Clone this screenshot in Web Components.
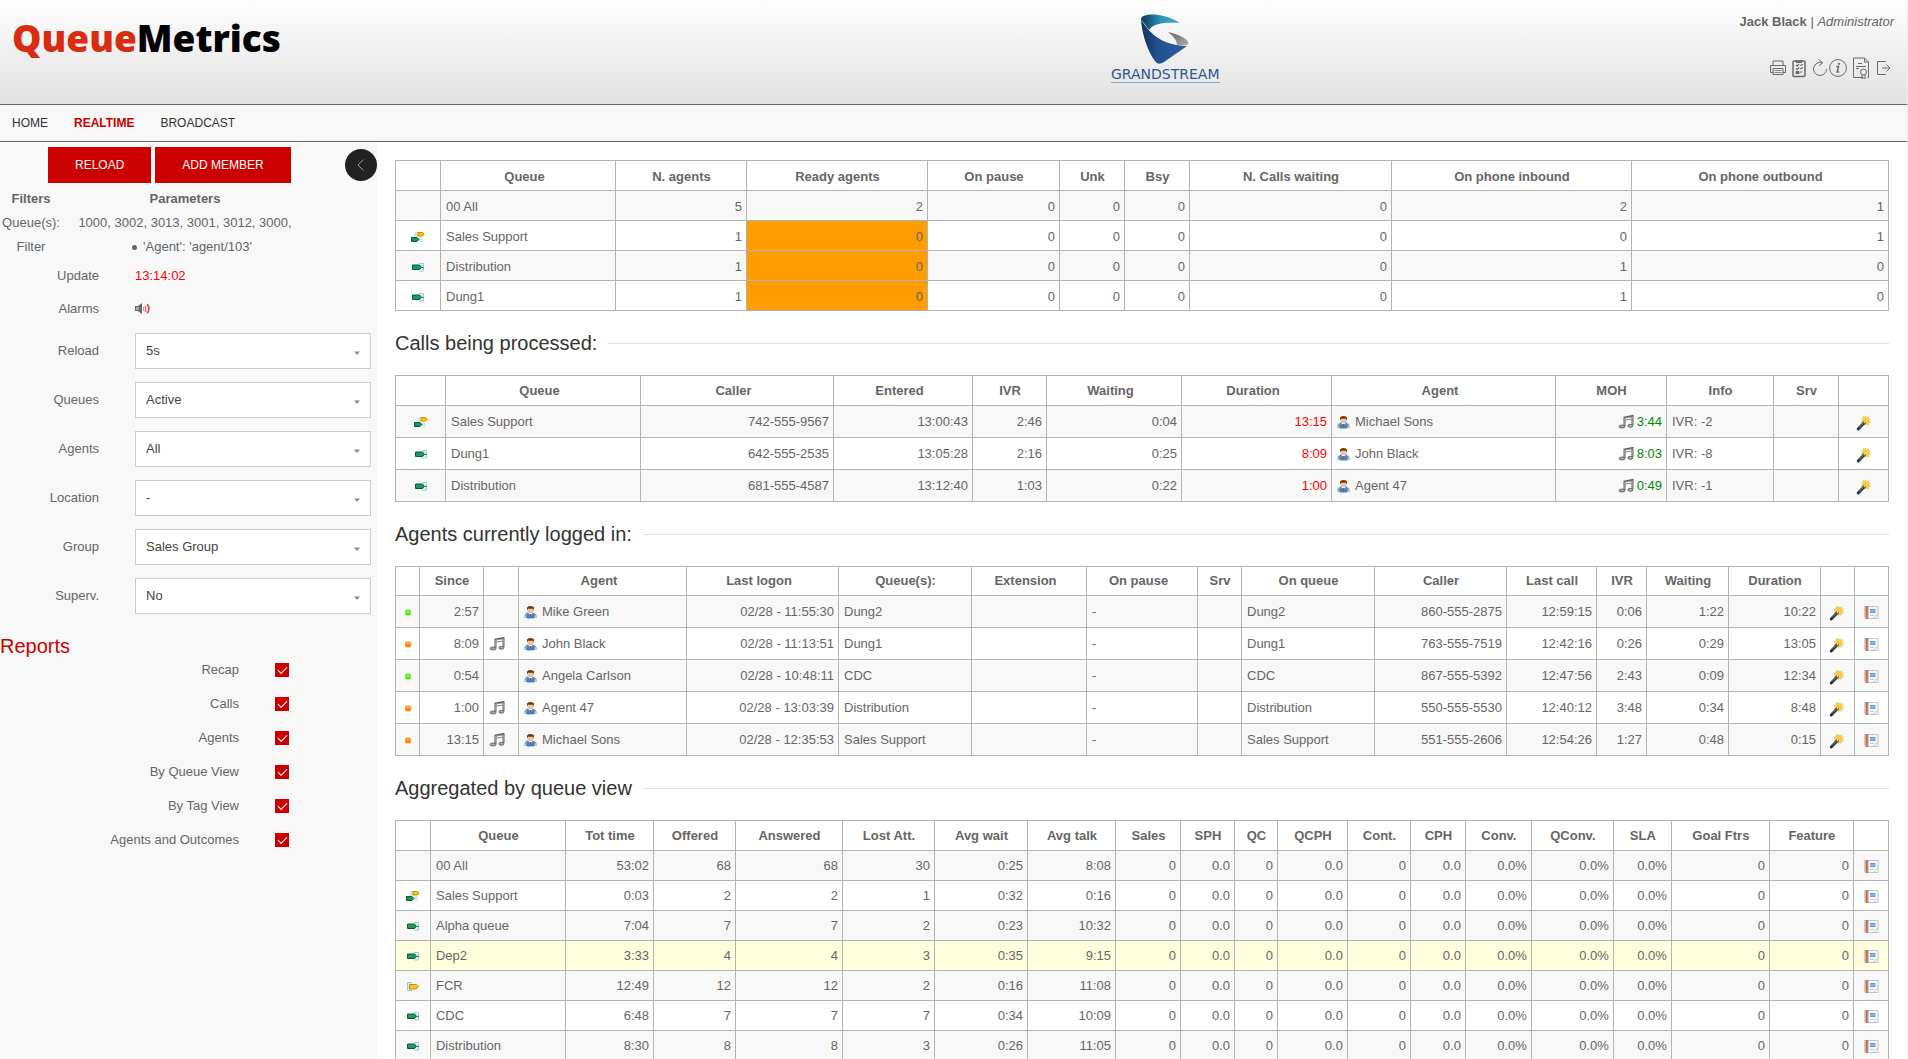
<!DOCTYPE html>
<html lang="en">
<head>
<meta charset="utf-8">
<title>QueueMetrics - Realtime</title>
<style>
html, body { margin: 0; height: 100%; overflow: hidden; background: #fff; }
body { font-family: "Liberation Sans", Arial, sans-serif; font-size: 13px; line-height: 20px; color: #666; }
</style>
</head>
<body>
<qm-app></qm-app>

<script>
const define = (name, html, setup) => {
  const template = document.createElement('template');
  template.innerHTML = html;
  customElements.define(name, class extends HTMLElement {
    connectedCallback() {
      if (this.shadowRoot) return;
      const root = this.attachShadow({ mode: 'open' });
      root.append(template.content.cloneNode(true));
      if (setup) setup.call(this, root);
    }
  });
};

/* ---------- icons ---------- */
const line = 'fill="none" stroke="#6b6b6b" stroke-width="1"';
const ICONS = {
  printer: [20, 22, `<g ${line}><path d="M5 8.500V4h10v4.500M5.500 15.500H2.500v-7h15v7h-3"/><path d="M5 11.500h10v6H5z"/><path d="M6.500 13.500h7M6.500 15.500h7" stroke="#888"/></g>`],
  clipboard: [22, 22, `<g ${line}><rect x="5" y="4" width="12" height="15.500" rx="1" stroke-width="1.500"/><path d="M8 3.500h6v2H8z" fill="#777"/><path d="M8 8l1.200 1.200L11 7M8 11.500l1.200 1.200 1.800-2.200M12 8.500l3-1M12 12l3-1.500M12 15h2" stroke-width="1.200"/><path d="M8 14.500h3v2H8z" fill="#666"/></g>`],
  refresh: [18, 22, `<g ${line}><path d="M16.500 12a6.500 6.500 0 1 1-4-6M8.500 2.500l4.200 3.300L9 9"/></g>`],
  info: [20, 22, `<g ${line}><circle cx="10" cy="11" r="8.400"/><path d="M8.300 9.500h2.200l-1.300 5.500h2" stroke-width="1.500"/><circle cx="11" cy="6.800" r=".7" fill="#666"/></g>`],
  certificate: [26, 22, `<g ${line}><path d="M15 20.500H5.500v-19.500h11l4 4v15.500h-1M16.500 1v4h4M10 6.500h4M8 9.500h10"/><circle cx="15.500" cy="15" r="3"/><path d="M14 17.800v4l1.500-1 1.500 1v-4"/><path d="M8 11.500h3"/></g>`],
  logout: [20, 22, `<g ${line}><path d="M11.500 5V4.500h-8v13h8V17M8 11h8M12.500 7.500l3.500 3.500-3.500 3.500"/></g>`],
  chevron: [12, 14, `<path d="M8.500 1.500L3 7l5.500 5.500" fill="none" stroke="#999"/>`],
  arrow: [8, 5, `<path d="M1 0.500h6L4 4z" fill="#888"/>`],
  speaker: [16, 12, `<path d="M0 3h3l4-3v11L3 8H0z" fill="#666"/><path d="M1 4h3v3H1z" fill="#aaa"/><path d="M8.500 4v4" stroke="#e88"/><path d="M10.500 3v6" stroke="#f66" stroke-width="1.500"/><path d="M12 1.500c2.500 1 2.500 7 0 8.500" fill="none" stroke="#e23a44" stroke-width="1.500"/>`],
  inbound: [14, 12, `<path d="M8 2.500h4.500v7.500H8" fill="#dff1f3" stroke="#9ccdd3"/><path d="M1.500 4h7L10.500 6.300 8.500 8.500h-7z" fill="#1b9a5c" stroke="#0a5a35"/><path d="M11 6.500h1.500" stroke="#267"/>`],
  outbound: [14, 12, `<path d="M6 2.500H1.500v8H6" fill="#d5f0f4" stroke="#8fcdd6"/><path d="M3.500 4.500h6.500l2.500 2-2.500 2.500H3.500z" fill="#ffc21a" stroke="#cf8a0c"/>`],
  mixed: [14, 12, `<path d="M3.500 1h3.500v5H3.500zM8.500 6h3v5H8.500z" fill="#cfe6f2"/><path d="M7 1.500h4.500L13.200 3.200 11.500 5H7z" fill="#ffc800" stroke="#d08a00"/><path d="M.500 6.500h5.500L8 8.500 6 10.500H.500z" fill="#179653" stroke="#0a5a35"/>`],
  person: [13, 14, `<path d="M.500 13V10l2.500-2.500h6.500L12.500 10v3z" fill="#5b9bd8"/><path d="M3 8.500h7v5H3z" fill="#3f86ca"/><path d="M0 10.500h2V13H0zM10.800 10.500h2V13h-2z" fill="#f0ba84"/><path d="M4.500 8h4L6.500 10.500z" fill="#fff"/><path d="M6 9h1.200v3H6z" fill="#d33"/><circle cx="6.500" cy="4.500" r="3.200" fill="#f3c49a"/><path d="M3 5.500V2.500Q3.500 1 6.500 1T10 2.500V5.500L9 3.800H4z" fill="#6b3b16"/>`],
  notes: [16, 14, `<path d="M6.500 11V2.500l8-1.500v9" fill="none" stroke="#5c5c5c" stroke-width="2"/><path d="M6.500 10V3l8-1.200V9.500" fill="none" stroke="#aaa" stroke-width=".7"/><path d="M7.500 5l6-.8" stroke="#888"/><ellipse cx="4" cy="11.500" rx="3" ry="1.500" fill="#aaa" stroke="#555" stroke-width=".8"/><ellipse cx="12.300" cy="10.800" rx="2.500" ry="1.500" fill="#aaa" stroke="#555" stroke-width=".8"/>`],
  wand: [16, 20, `<path d="M9.500 4l1 2 2-1.300-.3 2.300 2.300.2-1.500 1.800 1.500 1.800-2.300.2.300 2.300-2-1.300-1 2-1-2-2 1.300V11L5 10l1.500-1.500L5.500 7l2-.3L7 4.500l1.800 1z" fill="#f8cf3a" stroke="#e8b21a" stroke-width=".4"/><path d="M2.200 17L8.500 10.500" stroke="#333" stroke-width="3" stroke-linecap="round"/><path d="M3 15.500l4.500-4.500" stroke="#999" stroke-width=".8"/><path d="M8 9.500l1.300 1.300" stroke="#ddd" stroke-width="2"/>`],
  book: [16, 15, `<path d="M3.500 1.500H15v12H3.500z" fill="#f6f8fa" stroke="#bfc5cb"/><path d="M2.500 1h2.300v13H2.500z" fill="#c4694c"/><path d="M1.800 1.500v12" stroke="#b9a08e" stroke-dasharray="1 1" stroke-width="1.600"/><path d="M5.300 1.500v12" stroke="#9a9a9a" stroke-width=".6"/><path d="M7 4h5.500v4H7z" fill="#6a9be0"/><path d="M7 6h5.500" stroke="#a9c6f0"/><path d="M7 10.500h4" stroke="#c8cdd4"/><path d="M11 13l3.500-4" stroke="#c5cbd2"/>`],
  ready: [8, 10, `<rect x="1" y="2.500" width="6" height="6" rx="2" fill="#6df01e"/><path d="M2 7.500h4" stroke="#43d813"/>`],
  busy: [8, 10, `<rect x="1" y="2.500" width="6" height="6" rx="2" fill="#ff8c10"/><path d="M2 4h4" stroke="#ffb84a"/>`],
  grandstream: [50, 52, `<defs><linearGradient id="a" x1="0" x2="1"><stop offset="0" stop-color="#0c3550"/><stop offset=".5" stop-color="#2a93b5"/><stop offset="1" stop-color="#3fb4d6"/></linearGradient><linearGradient id="b" x1="0" x2="1"><stop offset="0" stop-color="#142f57"/><stop offset=".35" stop-color="#22508f"/><stop offset="1" stop-color="#2b5c9c"/></linearGradient><linearGradient id="c" x1="0" x2="1" y2="1"><stop offset="0" stop-color="#666"/><stop offset="1" stop-color="#aaa"/></linearGradient></defs><path d="M1 5C2 -1 22 -2 40 9 27 8 13 9 9 16z" fill="url(#a)"/><path d="M1 5C8 18 22 32 47 32L24 48Q18 52 15 47C7 36 2 20 1 5z" fill="url(#b)"/><path d="M28 18C38 20 48 25 48.500 29Q49 32 37 31C37 26 33 22 28 18z" fill="url(#c)"/>`]
};
define('qm-icon', `<style>:host{display:inline-block;vertical-align:middle;line-height:0}svg{display:block}</style>`, function (root) {
  const [w, h, art] = ICONS[this.getAttribute('name')];
  root.innerHTML += `<svg width="${w}" height="${h}" viewBox="0 0 ${w} ${h}" aria-hidden="true">${art}</svg>`;
});

/* ---------- header ---------- */
define('qm-header', `
<style>
:host { display: grid; grid-template-columns: 44% 34% 22%; height: 104px; box-sizing: content-box;
  background: linear-gradient(#fefefe, #e2e2e2); border-bottom: 1px solid #666; }
.brand { padding: 14px 0 0 12px; font: 800 37px/48px "Open Sans", sans-serif; color: #000; white-space: nowrap; }
.brand span { color: #d92d12; }
.partner { display: flex; flex-direction: column; align-items: center; padding: 14px 0 0 4px; }
.partner div { font: 14px/16px "DejaVu Sans", sans-serif; color: #2b5796; border-bottom: 1px solid #8fa9cc; }
.user { display: flex; flex-direction: column; align-items: flex-end; padding: 12px 13px 0 0; gap: 25px; }
.tools { display: flex; }
button { border: 0; padding: 0; background: none; display: block; cursor: pointer; }
</style>
<div class="brand"><span>Queue</span>Metrics</div>
<div class="partner"><qm-icon name="grandstream"></qm-icon><div>GRANDSTREAM</div></div>
<div class="user">
  <div><b>Jack Black</b> | <i>Administrator</i></div>
  <div class="tools">
    <button aria-label="Print"><qm-icon name="printer"></qm-icon></button>
    <button aria-label="Tasks"><qm-icon name="clipboard"></qm-icon></button>
    <button aria-label="Refresh"><qm-icon name="refresh"></qm-icon></button>
    <button aria-label="Info"><qm-icon name="info"></qm-icon></button>
    <button aria-label="License"><qm-icon name="certificate"></qm-icon></button>
    <button aria-label="Log out"><qm-icon name="logout"></qm-icon></button>
  </div>
</div>`);

define('qm-nav', `
<style>
:host { display: block; background: #f8f8f8; border-bottom: 1px solid #666; }
nav { display: flex; gap: 26px; height: 36px; align-items: center; padding-left: 12px; font-size: 12px; }
a { color: #333; text-decoration: none; }
a[aria-current] { color: #c00; font-weight: bold; }
</style>
<nav><a href="#home">HOME</a><a href="#realtime" aria-current="page">REALTIME</a><a href="#broadcast">BROADCAST</a></nav>`);

/* ---------- sidebar ---------- */
define('qm-field', `
<style>
:host { display: grid; grid-template-columns: 99px 1fr; column-gap: 36px; align-items: center; height: 36px; margin-bottom: 13px; }
label { text-align: right; }
.box { display: grid; align-items: center; }
select, qm-icon { grid-area: 1 / 1; }
select { appearance: none; width: 100%; height: 36px; margin: 0; padding: 0 10px; border: 1px solid #ccc; border-radius: 0;
  background: #fff; color: #444; font: inherit; }
qm-icon { justify-self: end; padding: 4px 10px 0 0; pointer-events: none; }
</style>
<label for="s"></label><div class="box"><select id="s"></select><qm-icon name="arrow"></qm-icon></div>`, function (root) {
  root.querySelector('label').textContent = this.getAttribute('label');
  root.querySelector('select').add(new Option(this.getAttribute('value')));
});

define('qm-check', `
<style>
:host { display: grid; grid-template-columns: 239px 14px; column-gap: 36px; align-items: center; height: 20px; margin-bottom: 14px; }
label { text-align: right; }
input { appearance: none; width: 14px; height: 14px; margin: 0; background: #c00; display: grid; place-items: center; }
input:checked::before { content: ""; width: 8px; height: 4px; border: solid #fff; border-width: 0 0 1px 1px; transform: rotate(-45deg) translate(1px, -1px); }
</style>
<label for="c"><slot></slot></label><input type="checkbox" id="c" checked>`);

define('qm-sidebar', `
<style>
:host { display: block; background: #f8f8f8; overflow: hidden; }
.actions { display: flex; align-items: center; gap: 4px; padding: 5px 0 0 48px; }
.actions button { height: 36px; border: 0; padding: 0 27px; background: #c00; color: #fff; font: inherit; font-size: 12px; }
.actions .collapse { width: 32px; height: 32px; border-radius: 50%; background: #222; padding: 0; margin-left: auto;
  display: flex; align-items: center; justify-content: center; }
.filters { border-collapse: collapse; table-layout: fixed; width: 308px; margin-top: 4px; }
.filters th, .filters td { height: 24px; padding: 0; text-align: center; }
.filters th:first-child { width: 62px; }
.filters tr > :first-child { white-space: nowrap; }
ul { margin: 0; padding: 0 0 0 14px; list-style: none; }
li { display: flex; align-items: center; justify-content: center; gap: 6px; }
li::before { content: ""; width: 5px; height: 5px; border-radius: 50%; background: #666; }
.row { display: grid; grid-template-columns: 99px 1fr; column-gap: 36px; align-items: center; height: 33px; }
.row > :first-child { text-align: right; }
.time { color: #f00; }
.fields { padding: 8px 6px 0 0; }
h2 { margin: 20px 0 2px; font-size: 20px; line-height: 24px; font-weight: normal; color: #c00; }
</style>
<div class="actions"><button>RELOAD</button><button>ADD MEMBER</button><button class="collapse" aria-label="Collapse"><qm-icon name="chevron"></qm-icon></button></div>
<table class="filters">
  <tr><th>Filters</th><th>Parameters</th></tr>
  <tr><td>Queue(s):</td><td>1000, 3002, 3013, 3001, 3012, 3000,</td></tr>
  <tr><td>Filter</td><td><ul><li>'Agent': 'agent/103'</li></ul></td></tr>
</table>
<div class="row"><span>Update</span><span class="time">13:14:02</span></div>
<div class="row"><span>Alarms</span><qm-icon name="speaker"></qm-icon></div>
<div class="fields">
  <qm-field label="Reload" value="5s"></qm-field>
  <qm-field label="Queues" value="Active"></qm-field>
  <qm-field label="Agents" value="All"></qm-field>
  <qm-field label="Location" value="-"></qm-field>
  <qm-field label="Group" value="Sales Group"></qm-field>
  <qm-field label="Superv." value="No"></qm-field>
</div>
<h2>Reports</h2>
<qm-check>Recap</qm-check>
<qm-check>Calls</qm-check>
<qm-check>Agents</qm-check>
<qm-check>By Queue View</qm-check>
<qm-check>By Tag View</qm-check>
<qm-check>Agents and Outcomes</qm-check>`);

/* ---------- content ---------- */
define('qm-heading', `
<style>
:host { display: flex; align-items: center; gap: 11px; height: 64px; }
h2 { margin: 0; font-size: 20px; line-height: 24px; font-weight: normal; color: #333; }
:host::after { content: ""; flex: 1; border-top: 1px solid #e2e2e2; }
</style><h2><slot></slot></h2>`);

/* Column: [title, relative width, alignment, sortable]. Cell: text, or [icon, text, css class]. */
const L = 'l', R = 'r', C = 'c', S = 'sort';
const TABLES = {
  recap: {
    cols: [['', 45, C], ['Queue', 175, L, S], ['N. agents', 131, R], ['Ready agents', 181, R], ['On pause', 132, R], ['Unk', 65, R], ['Bsy', 65, R], ['N. Calls waiting', 202, R], ['On phone inbound', 240, R], ['On phone outbound', 257, R]],
    rows: [
      ['', '00 All', '5', '2', '0', '0', '0', '0', '2', '1'],
      [['mixed'], 'Sales Support', '1', ['', '0', 'warn'], '0', '0', '0', '0', '0', '1'],
      [['inbound'], 'Distribution', '1', ['', '0', 'warn'], '0', '0', '0', '0', '1', '0'],
      [['inbound'], 'Dung1', '1', ['', '0', 'warn'], '0', '0', '0', '0', '1', '0']
    ]
  },
  calls: {
    cols: [['', 50, C], ['Queue', 195, L, S], ['Caller', 193, R, S], ['Entered', 139, R, S], ['IVR', 74, R], ['Waiting', 135, R, S], ['Duration', 150, R, S], ['Agent', 224, L, S], ['MOH', 111, R], ['Info', 107, L], ['Srv', 65, L], ['', 50, C]],
    rows: [
      ['mixed', 'Sales Support', '742-555-9567', '13:00:43', '2:46', '0:04', '13:15', 'Michael Sons', '3:44', '2'],
      ['inbound', 'Dung1', '642-555-2535', '13:05:28', '2:16', '0:25', '8:09', 'John Black', '8:03', '8'],
      ['inbound', 'Distribution', '681-555-4587', '13:12:40', '1:03', '0:22', '1:00', 'Agent 47', '0:49', '1']
    ].map(([i, q, c, e, v, w, d, a, m, n]) => [[i], q, c, e, v, w, ['', d, 'red'], ['person', a], ['notes', m, 'green'], 'IVR: -' + n, '', ['wand']])
  },
  agents: {
    cols: [['', 24, C], ['Since', 64, R], ['', 35, L], ['Agent', 168, L, S], ['Last logon', 152, R, S], ['Queue(s):', 133, L], ['Extension', 115, L, S], ['On pause', 111, L, S], ['Srv', 44, L], ['On queue', 133, L], ['Caller', 132, R], ['Last call', 90, R], ['IVR', 50, R], ['Waiting', 82, R], ['Duration', 92, R], ['', 34, C], ['', 34, C]],
    rows: [
      ['ready', '2:57', 'Mike Green', '11:55:30', 'Dung2', '860-555-2875', '12:59:15', '0:06', '1:22', '10:22'],
      ['busy', '8:09', 'John Black', '11:13:51', 'Dung1', '763-555-7519', '12:42:16', '0:26', '0:29', '13:05'],
      ['ready', '0:54', 'Angela Carlson', '10:48:11', 'CDC', '867-555-5392', '12:47:56', '2:43', '0:09', '12:34'],
      ['busy', '1:00', 'Agent 47', '13:03:39', 'Distribution', '550-555-5530', '12:40:12', '3:48', '0:34', '8:48'],
      ['busy', '13:15', 'Michael Sons', '12:35:53', 'Sales Support', '551-555-2606', '12:54:26', '1:27', '0:48', '0:15']
    ].map(([s, t, a, l, q, c, k, v, w, d]) => [[s], t, s === 'busy' ? ['notes'] : '', ['person', a], '02/28 - ' + l, q, '', '-', '', q, c, k, v, w, d, ['wand'], ['book']])
  },
  queues: {
    cols: [['', 35, C], ['Queue', 135, L], ['Tot time', 88, R], ['Offered', 82, R], ['Answered', 107, R], ['Lost Att.', 92, R], ['Avg wait', 93, R], ['Avg talk', 88, R], ['Sales', 65, R], ['SPH', 54, R], ['QC', 43, R], ['QCPH', 70, R], ['Cont.', 63, R], ['CPH', 55, R], ['Conv.', 66, R], ['QConv.', 82, R], ['SLA', 58, R], ['Goal Ftrs', 98, R], ['Feature', 84, R], ['', 35, C]],
    mark: 3,
    rows: [
      ['', '00 All', '53:02', '68', '30', '0:25', '8:08'],
      ['mixed', 'Sales Support', '0:03', '2', '1', '0:32', '0:16'],
      ['inbound', 'Alpha queue', '7:04', '7', '2', '0:23', '10:32'],
      ['inbound', 'Dep2', '3:33', '4', '3', '0:35', '9:15'],
      ['outbound', 'FCR', '12:49', '12', '2', '0:16', '11:08'],
      ['inbound', 'CDC', '6:48', '7', '7', '0:34', '10:09'],
      ['inbound', 'Distribution', '8:30', '8', '3', '0:26', '11:05']
    ].map(([i, q, t, n, lost, w, k]) => [i ? [i] : '', q, t, n, n, lost, w, k, '0', '0.0', '0', '0.0', '0', '0.0', '0.0%', '0.0%', '0.0%', '0', '0', ['book']])
  }
};

define('qm-table', `
<style>
:host { display: block; --head: 30px; --row: 30px; --drop: 0px; }
:host([name="recap"]) { --drop: 2px; }
:host([name="calls"]) { --row: 32px; }
:host([name="agents"]) { --head: 29px; --row: 32px; }
table { width: 100%; border-collapse: collapse; table-layout: fixed; }
th, td { border: 1px solid #b3b3b3; padding: var(--drop) 4px 0 5px; white-space: nowrap; line-height: 20px; }
thead tr { height: var(--head); }
tbody tr { height: var(--row); }
tbody tr:nth-child(odd) { background: #f8f8f8; }
tbody tr.mark { background: #ffffdd; }
th.sort { padding-right: 12px; }
.l { text-align: left; } .r { text-align: right; } .c { text-align: center; padding-left: 0; padding-right: 0; }
.warn { background: #ff9c00; }
.red { color: #f00; }
.green { color: #008a00; }
qm-icon + span { margin-left: 5px; }
.green qm-icon + span { margin-left: 3px; }
button { border: 0; padding: 0; background: none; cursor: pointer; vertical-align: middle; display: inline-block; line-height: 0; }
</style>
<table><colgroup></colgroup><thead><tr></tr></thead><tbody></tbody></table>`, function (root) {
  const { cols, rows, mark } = TABLES[this.getAttribute('name')];
  const total = cols.reduce((sum, c) => sum + c[1], 0);
  root.querySelector('colgroup').innerHTML = cols.map(c => `<col style="width:calc(100% * ${c[1]} / ${total})">`).join('');
  root.querySelector('thead tr').innerHTML = cols.map(c => `<th class="${c[3] || ''}">${c[0]}</th>`).join('');
  const cell = (value, i) => {
    const [icon, text = '', cls = ''] = Array.isArray(value) ? value : ['', value];
    let inner = icon ? `<qm-icon name="${icon}"></qm-icon>` : '';
    if (icon === 'wand' || icon === 'book') inner = `<button aria-label="${icon === 'wand' ? 'Actions' : 'Details'}">${inner}</button>`;
    if (text) inner += icon ? `<span>${text}</span>` : text;
    return `<td class="${cols[i][2]} ${cls}">${inner}</td>`;
  };
  root.querySelector('tbody').innerHTML = rows.map((r, n) => `<tr${n === mark ? ' class="mark"' : ''}>${r.map(cell).join('')}</tr>`).join('');
});

define('qm-app', `
<style>
:host { display: flex; flex-direction: column; height: 100vh; box-sizing: border-box; border-right: 1px solid #eee; overflow: hidden; }
qm-header, qm-nav { flex: none; }
.body { flex: 1; min-height: 0; display: grid; grid-template-columns: 377px 1fr; }
main { padding: 18px 18px 0; overflow: hidden; min-width: 0; }
</style>
<qm-header></qm-header>
<qm-nav></qm-nav>
<div class="body">
  <qm-sidebar></qm-sidebar>
  <main>
    <qm-table name="recap"></qm-table>
    <qm-heading>Calls being processed:</qm-heading>
    <qm-table name="calls"></qm-table>
    <qm-heading>Agents currently logged in:</qm-heading>
    <qm-table name="agents"></qm-table>
    <qm-heading>Aggregated by queue view</qm-heading>
    <qm-table name="queues"></qm-table>
  </main>
</div>`);
</script>
</body>
</html>
